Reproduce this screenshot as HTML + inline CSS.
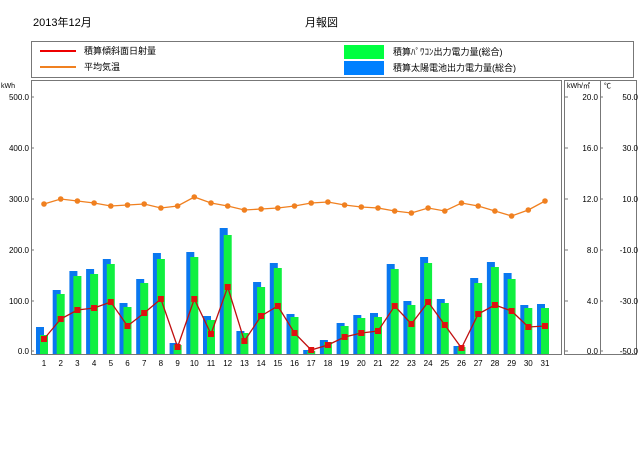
<!DOCTYPE html>
<html><head><meta charset="utf-8"><style>
body{margin:0;background:#fff;width:640px;height:452px;overflow:hidden}
svg{display:block;font-family:"Liberation Sans","Noto Sans CJK JP",sans-serif}
</style></head><body>
<svg id="s" width="640" height="452" xmlns="http://www.w3.org/2000/svg">
<text x="33" y="26" font-size="11">2013年12月</text>
<text x="305" y="26" font-size="11">月報図</text>
<rect x="31.5" y="41.5" width="602" height="36" fill="none" stroke="#777"/>
<line x1="40" y1="51" x2="76" y2="51" stroke="#e00" stroke-width="2"/>
<line x1="40" y1="67" x2="76" y2="67" stroke="#f08020" stroke-width="2"/>
<text x="84" y="54" font-size="9">積算傾斜面日射量</text>
<text x="84" y="70" font-size="9">平均気温</text>
<rect x="344" y="45" width="40" height="14" fill="#00ff40"/>
<rect x="344" y="61" width="40" height="14" fill="#0080ff"/>
<text x="393" y="55" font-size="9">積算ﾊﾟﾜｺﾝ出力電力量(総合)</text>
<text x="393" y="71" font-size="9">積算太陽電池出力電力量(総合)</text>
<rect x="31.5" y="80.5" width="530" height="274" fill="none" stroke="#777"/>
<rect x="564.5" y="80.5" width="36" height="274" fill="none" stroke="#777"/>
<rect x="600.5" y="80.5" width="36" height="274" fill="none" stroke="#777"/>
<text x="1" y="88" font-size="7">kWh</text>
<text x="567" y="88" font-size="7">kWh/㎡</text>
<text x="604" y="88" font-size="7">℃</text>
<g id="g"></g>
</svg>
<script>
var g=document.getElementById('g'),h='';
var B=[327,290,271,269,259,303,279,253,343,252,316,228,331,282,263,314,350,340,323,315,313,264,301,257,299,346,278,262,273,305,304];
var G=[335,294,276,274,264,307,283,259,345,257,320,235,333,287,268,317,351,342,326,318,317,269,305,263,303,347,283,267,279,308,308];
var R=[339,319,310,308,302,326,313,299,347,299,334,287,341,316,306,333,350,345,337,333,331,306,324,302,325,348,314,305,311,327,326];
var T=[204,199,201,203,206,205,204,208,206,197,203,206,210,209,208,206,203,202,205,207,208,211,213,208,211,203,206,211,216,210,201];
var yl=[[97,'500.0','20.0','50.0'],[148,'400.0','16.0','30.0'],[199,'300.0','12.0','10.0'],[250,'200.0','8.0','-10.0'],[301,'100.0','4.0','-30.0'],[351,'0.0','0.0','-50.0']];
yl.forEach(function(a){h+='<text x="29" y="'+(a[0]+3)+'" font-size="8" text-anchor="end">'+a[1]+'</text><line x1="31" y1="'+a[0]+'" x2="34" y2="'+a[0]+'" stroke="#777"/>';
h+='<text x="598" y="'+(a[0]+3)+'" font-size="8" text-anchor="end">'+a[2]+'</text><line x1="565" y1="'+a[0]+'" x2="568" y2="'+a[0]+'" stroke="#777"/><line x1="600" y1="'+a[0]+'" x2="603" y2="'+a[0]+'" stroke="#777"/>';
h+='<text x="638" y="'+(a[0]+3)+'" font-size="8" text-anchor="end">'+a[3]+'</text>';});
var rp='',tp='';
for(var i=0;i<31;i++){var c=44+i*16.7;
h+='<rect x="'+(c-8)+'" y="'+B[i]+'" width="8" height="'+(354-B[i])+'" fill="#0a78f0"/>';
h+='<rect x="'+(c-4)+'" y="'+G[i]+'" width="8" height="'+(354-G[i])+'" fill="#10f040"/>';
h+='<text x="'+c+'" y="366" font-size="8" text-anchor="middle">'+(i+1)+'</text>';
rp+=(i?'L':'M')+c+' '+R[i];tp+=(i?'L':'M')+c+' '+T[i];}
h+='<path d="'+rp+'" fill="none" stroke="#c01010" stroke-width="1.3"/>';
h+='<path d="'+tp+'" fill="none" stroke="#f08020" stroke-width="1.3"/>';
for(var i=0;i<31;i++){var c=44+i*16.7;
h+='<rect x="'+(c-3)+'" y="'+(R[i]-3)+'" width="6" height="6" fill="#e01010"/>';
h+='<circle cx="'+c+'" cy="'+T[i]+'" r="2.8" fill="#f08020"/>';}
g.innerHTML=h;
</script>
</body></html>
